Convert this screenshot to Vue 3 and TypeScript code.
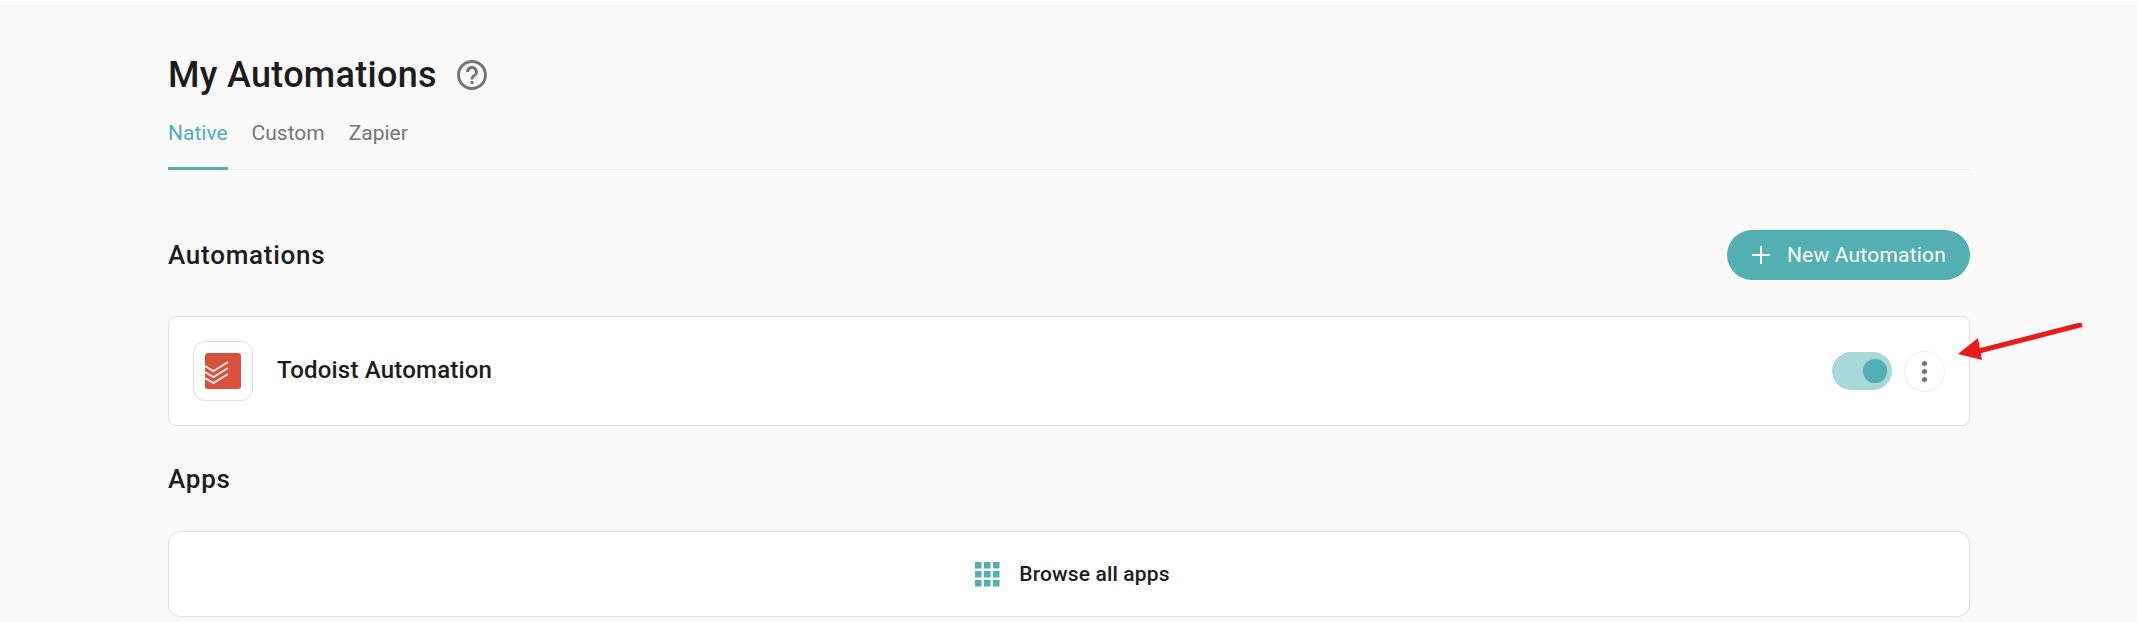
<script setup lang="ts">
const tabs = ['Native', 'Custom', 'Zapier']
</script>

<template>
  <div class="page">
    <main class="content">
      <header class="title-row">
        <h1>My Automations</h1>
        <svg class="help" width="36" height="36" viewBox="0 0 24 24" fill="#757575">
          <path d="M11 18h2v-2h-2v2zm1-16C6.48 2 2 6.48 2 12s4.48 10 10 10 10-4.48 10-10S17.52 2 12 2zm0 18c-4.41 0-8-3.59-8-8s3.59-8 8-8 8 3.59 8 8-3.59 8-8 8zm0-14c-2.21 0-4 1.79-4 4h2c0-1.1.9-2 2-2s2 .9 2 2c0 2-3 1.75-3 5h2c0-2.25 3-2.5 3-5 0-2.21-1.79-4-4-4z" />
        </svg>
      </header>

      <nav class="tabs">
        <a v-for="(tab, i) in tabs" :key="tab" class="tab" :class="{ active: i === 0 }">{{ tab }}</a>
      </nav>

      <section class="section-head">
        <h2>Automations</h2>
        <button class="new-btn">
          <svg width="20" height="20" viewBox="0 0 20 20" stroke="#fff" stroke-width="2">
            <path d="M10 1v18M1 10h18" />
          </svg>
          New Automation
        </button>
      </section>

      <div class="card automation">
        <div class="app-icon">
          <svg width="36" height="36" viewBox="0 0 36 36">
            <rect width="36" height="36" rx="3" fill="#d7513c" />
            <path d="M0 13l8.5 5 14.5-9M0 19l8.5 5 14.5-9M0 25l8.5 5 14.5-9" fill="none" stroke="#fbe9e5" stroke-width="2" />
          </svg>
        </div>
        <span class="name">Todoist Automation</span>
        <div class="toggle"><span class="knob"></span></div>
        <button class="menu">
          <span></span><span></span><span></span>
        </button>
      </div>

      <h2 class="apps-title">Apps</h2>

      <div class="card browse">
        <svg width="25" height="25" viewBox="0 0 25 25" fill="#52b0b2">
          <rect v-for="n in 9" :key="n" :x="((n - 1) % 3) * 9" :y="Math.floor((n - 1) / 3) * 9" width="6.5" height="6.5" />
        </svg>
        <span>Browse all apps</span>
      </div>
    </main>

    <svg class="arrow" width="130" height="40" viewBox="0 0 130 40">
      <path d="M127 1.5 L20 29" stroke="#e81c1c" stroke-width="5" fill="none" />
      <path d="M3 31 L23 15 L27 37 Z" fill="#e81c1c" />
    </svg>
  </div>
</template>

<style>
html,
body {
  margin: 0;
  background: #fff;
}
</style>

<style scoped>
.page {
  position: relative;
  height: 617px;
  margin-top: 5px;
  background: #fafafa;
  border-top: 1px solid #f2f2f2;
  box-sizing: border-box;
  overflow: hidden;
  font-family: Roboto, "Liberation Sans", sans-serif;
  color: #1c1c1c;
}

.content {
  width: 1802px;
  margin-left: 168px;
}

.title-row {
  display: flex;
  align-items: center;
  gap: 17px;
  height: 48px;
  margin-top: 45px;
}

h1 {
  margin: 0;
  font-size: 36px;
  font-weight: 500;
  letter-spacing: 0.3px;
}

.tabs {
  display: flex;
  gap: 24px;
  margin-top: 12px;
  height: 59px;
  box-sizing: border-box;
  border-bottom: 1px solid #eeeeee;
}

.tab {
  height: 59px;
  box-sizing: border-box;
  padding-top: 9px;
  font-size: 21px;
  line-height: 26px;
  color: #757575;
}

.tab.active {
  color: #52b0b2;
  border-bottom: 3px solid #52b0b2;
}

.section-head {
  display: flex;
  align-items: center;
  justify-content: space-between;
  margin-top: 60px;
}

h2 {
  margin: 0;
  font-size: 26px;
  line-height: 30px;
  font-weight: 500;
  letter-spacing: 0.75px;
}

.new-btn {
  display: flex;
  align-items: center;
  gap: 16px;
  height: 50px;
  padding: 0 24px;
  border: none;
  border-radius: 25px;
  background: #52b0b2;
  color: #fff;
  font-family: inherit;
  font-size: 21px;
  font-weight: 400;
  letter-spacing: 0.2px;
}

.card {
  box-sizing: border-box;
  background: #fff;
  border: 1px solid #e0e0e0;
  border-radius: 8px;
}

.automation {
  display: flex;
  align-items: center;
  height: 110px;
  margin-top: 36px;
  padding: 0 24px;
}

.app-icon {
  display: flex;
  align-items: center;
  justify-content: center;
  width: 60px;
  height: 60px;
  box-sizing: border-box;
  border: 1px solid #e0e0e0;
  border-radius: 12px;
}

.name {
  flex: 1;
  margin-left: 24px;
  margin-bottom: 2px;
  font-size: 24px;
  font-weight: 500;
  letter-spacing: 0.2px;
}

.toggle {
  display: flex;
  align-items: center;
  justify-content: flex-end;
  width: 60px;
  height: 38px;
  padding-right: 5px;
  box-sizing: border-box;
  border-radius: 19px;
  background: #a8d8da;
}

.knob {
  width: 24px;
  height: 24px;
  border-radius: 50%;
  background: #52b0b2;
  box-shadow: 0 0 2px rgba(0, 0, 0, 0.12);
}

.menu {
  display: flex;
  flex-direction: column;
  align-items: center;
  justify-content: center;
  gap: 3px;
  width: 41px;
  height: 41px;
  margin-left: 12px;
  padding: 0;
  border: 1px solid #eeeeee;
  border-radius: 50%;
  background: #fff;
}

.menu span {
  width: 5px;
  height: 5px;
  border-radius: 50%;
  background: #757575;
}

.apps-title {
  margin-top: 38px;
}

.browse {
  display: flex;
  align-items: center;
  justify-content: center;
  gap: 19px;
  height: 86px;
  margin-top: 37px;
  padding-left: 7px;
  border-radius: 12px;
  font-size: 21px;
  font-weight: 500;
  letter-spacing: 0.15px;
}

.arrow {
  position: absolute;
  left: 1955px;
  top: 317px;
}
</style>
